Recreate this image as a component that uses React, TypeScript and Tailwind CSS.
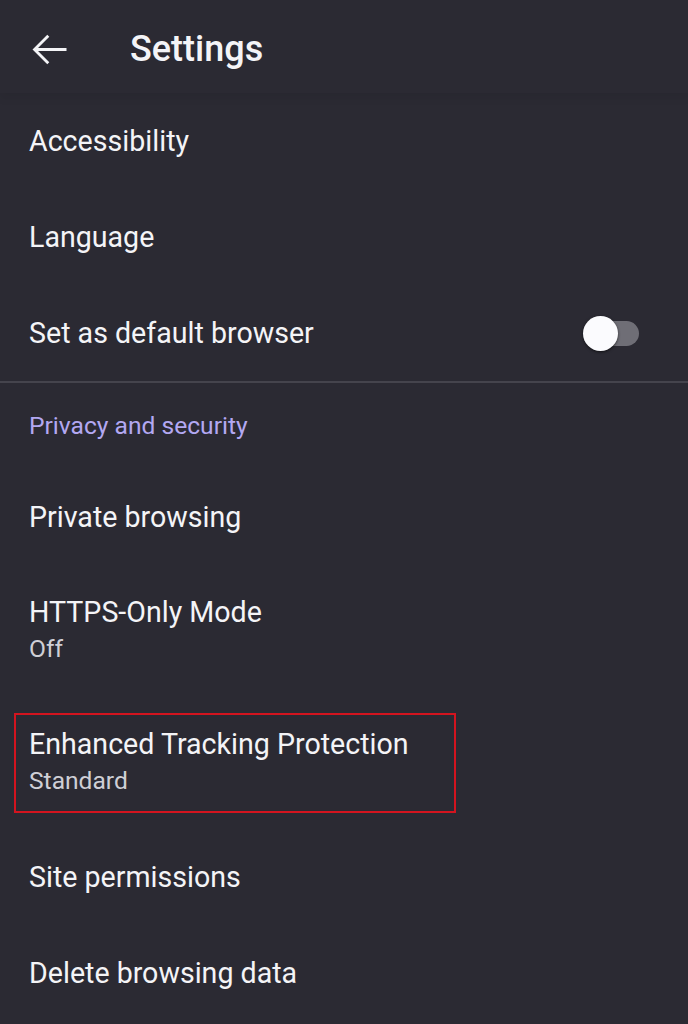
import React from "react";

type Row = { title: string; sub?: string; highlight?: boolean };

const TOP_ROWS: Row[] = [
  { title: "Accessibility" },
  { title: "Language" },
];

const PRIVACY_ROWS: Row[] = [
  { title: "Private browsing" },
  { title: "HTTPS-Only Mode", sub: "Off" },
  { title: "Enhanced Tracking Protection", sub: "Standard", highlight: true },
  { title: "Site permissions" },
  { title: "Delete browsing data" },
];

function SettingRow({ row }: { row: Row }) {
  return (
    <div
      className={`relative flex flex-col justify-center px-[29px] ${
        row.sub ? "h-[132px]" : "h-[96px]"
      }`}
    >
      <span className="text-[28.6px] leading-[35px] text-[#f4f4f7]">{row.title}</span>
      {row.sub && (
        <span className="text-[24.6px] leading-[37px] text-[#cfcfd6]">{row.sub}</span>
      )}
      {row.highlight && (
        <div className="absolute left-[14px] top-[16px] w-[442px] h-[100px] border-2 border-[#d3141f]" />
      )}
    </div>
  );
}

export default function App() {
  return (
    <div
      className="w-[688px] h-[1024px] overflow-hidden bg-[#2b2a33] text-white"
      style={{ fontFamily: "Roboto, 'Noto Sans', sans-serif" }}
    >
      <div className="h-[93px] pt-[6px] flex items-center shadow-[0_6px_8px_rgba(0,0,0,0.06)]">
        <svg viewBox="0 0 24 24" className="ml-[24px] w-[51px] h-[51px]" fill="#f4f4f7">
          <path d="M20 11.25H6.6l5.3-5.3-.95-.95L4 12l6.95 6.95.95-.95-5.3-5.3H20z" />
        </svg>
        <span className="ml-[55px] text-[36px] font-medium text-[#f4f4f7] -mt-[2px]">
          Settings
        </span>
      </div>

      {TOP_ROWS.map((row) => (
        <SettingRow key={row.title} row={row} />
      ))}

      <div className="h-[96px] flex items-center justify-between pl-[29px] pr-[49px]">
        <span className="text-[28.6px] leading-[35px] text-[#f4f4f7]">Set as default browser</span>
        <div className="relative w-[56px] h-[36px] flex items-center">
          <div className="absolute right-0 w-[38px] h-[25px] rounded-full bg-[#6f6e76]" />
          <div className="absolute left-0 w-[35px] h-[35px] rounded-full bg-[#fbfbfe] shadow-[0_1px_3px_rgba(0,0,0,0.6)]" />
        </div>
      </div>

      <div className="h-[2px] bg-[#45444d]" />

      <div className="h-[86px] flex items-center px-[29px]">
        <span className="text-[24.6px] text-[#b3a8f2]">Privacy and security</span>
      </div>

      {PRIVACY_ROWS.map((row) => (
        <SettingRow key={row.title} row={row} />
      ))}
    </div>
  );
}
